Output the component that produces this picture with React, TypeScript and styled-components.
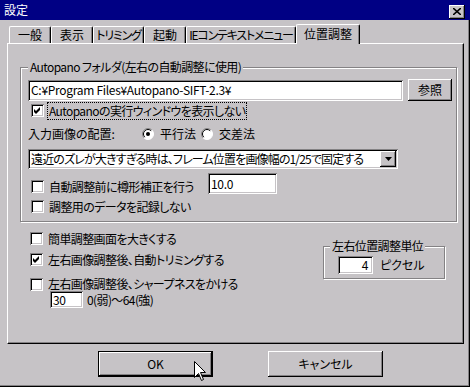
import React from 'react'
import styled, { createGlobalStyle, css } from 'styled-components'

const FACE = '#c6c3c6'
const SHADOW = '#848284'
const TITLE = '#000084'

const GlobalStyle = createGlobalStyle`
  html, body {
    margin: 0;
    padding: 0;
    background: ${FACE};
  }
  body {
    font-family: 'Noto Sans CJK JP', 'Noto Sans', sans-serif;
    font-size: 12px;
    line-height: 14px;
    letter-spacing: -0.6px;
    color: #000;
    font-feature-settings: 'palt' 1;
  }
  * {
    box-sizing: border-box;
  }
`

const raised = css`
  background: ${FACE};
  box-shadow: inset -1px -1px 0 #000, inset 1px 1px 0 #fff, inset -2px -2px 0 ${SHADOW};
`

const sunken = css`
  background: #fff;
  box-shadow: inset 1px 1px 0 ${SHADOW}, inset -1px -1px 0 #fff, inset 2px 2px 0 #000, inset -2px -2px 0 ${FACE};
`

const etched = css`
  border: 1px solid ${SHADOW};
  box-shadow: 1px 1px 0 #fff, inset 1px 1px 0 #fff;
`

const Window = styled.div`
  width: 470px;
  height: 387px;
  background: ${FACE};
  display: flex;
  flex-direction: column;
  box-shadow: inset -1px -1px 0 #000, inset -2px -2px 0 ${SHADOW};
`

const TitleBar = styled.div`
  height: 20px;
  background: ${TITLE};
  color: #fff;
  display: flex;
  align-items: center;
  padding: 0 5px 0 4px;
`

const TitleText = styled.span`
  font-size: 12px;
  letter-spacing: 0;
`

const CloseButton = styled.div`
  ${raised};
  margin-left: auto;
  margin-top: 3px;
  width: 16px;
  height: 14px;
  display: flex;
  align-items: center;
  justify-content: center;
`

const Body = styled.div`
  padding: 4px 0 0 7px;
`

const TabStrip = styled.div`
  height: 19px;
  display: flex;
  align-items: flex-end;
  padding-left: 2px;
`

const Tab = styled.div<{ $w: number; $active?: boolean; $tight?: boolean }>`
  width: ${(p) => p.$w}px;
  height: ${(p) => (p.$active ? 20 : 17)}px;
  margin-bottom: ${(p) => (p.$active ? -1 : 0)}px;
  position: relative;
  z-index: ${(p) => (p.$active ? 1 : 0)};
  background: ${FACE};
  border-top: 1px solid #fff;
  border-left: 1px solid #fff;
  border-right: 1px solid #000;
  border-radius: 2px 2px 0 0;
  box-shadow: inset -1px 0 0 ${SHADOW};
  display: flex;
  justify-content: center;
  padding-top: ${(p) => (p.$active ? 2 : 1)}px;
  white-space: nowrap;
  letter-spacing: ${(p) => (p.$tight ? -1.2 : 0)}px;
`

const Panel = styled.div`
  width: 457px;
  height: 301px;
  border-top: 1px solid #fff;
  border-left: 1px solid #fff;
  border-right: 1px solid #000;
  border-bottom: 1px solid #000;
  box-shadow: inset -1px -1px 0 ${SHADOW};
  padding: 16px 0 0 12px;
`

const Group = styled.fieldset<{ $w: number; $h: number }>`
  ${etched};
  width: ${(p) => p.$w}px;
  height: ${(p) => p.$h}px;
  margin: 0;
  padding: 0 4px 0 7px;
  min-width: 0;
`

const Legend = styled.legend`
  padding: 0 2px;
  line-height: 14px;
  background: ${FACE};
  white-space: nowrap;
`

const Column = styled.div`
  display: flex;
  flex-direction: column;
`

const Row = styled.div<{ $mt: number; $h: number; $align?: string }>`
  display: flex;
  align-items: ${(p) => p.$align || 'center'};
  margin-top: ${(p) => p.$mt}px;
  height: ${(p) => p.$h}px;
`

const TextBox = styled.div<{ $w: number; $h: number; $right?: boolean }>`
  ${sunken};
  width: ${(p) => p.$w}px;
  height: ${(p) => p.$h}px;
  padding: 0 ${(p) => (p.$right ? 5 : 3)}px 0 3px;
  display: flex;
  align-items: center;
  justify-content: ${(p) => (p.$right ? 'flex-end' : 'flex-start')};
  white-space: nowrap;
  overflow: hidden;
  letter-spacing: -0.3px;
`

const PushButton = styled.div<{ $w: number; $h: number; $default?: boolean }>`
  ${raised};
  width: ${(p) => p.$w}px;
  height: ${(p) => p.$h}px;
  display: flex;
  align-items: center;
  justify-content: center;
  position: relative;
  letter-spacing: 0;
  ${(p) =>
    p.$default &&
    css`
      border: 1px solid #000;
    `}
`

const CheckItem = styled.label<{ $w?: number; $focus?: boolean }>`
  display: flex;
  align-items: center;
  gap: 4px;
  padding-left: 3px;
  width: ${(p) => (p.$w ? `${p.$w}px` : 'auto')};
  white-space: nowrap;
  span {
    padding: 1px 1px;
    outline: ${(p) => (p.$focus ? '1px dotted #000' : 'none')};
  }
`

const Box = styled.div`
  ${sunken};
  width: 13px;
  height: 13px;
  flex: none;
`

const Caption = styled.span<{ $w?: number }>`
  display: inline-block;
  width: ${(p) => (p.$w ? `${p.$w}px` : 'auto')};
  white-space: nowrap;
  letter-spacing: 0;
`

const RadioItem = styled.label<{ $w?: number }>`
  display: flex;
  align-items: center;
  gap: 6px;
  width: ${(p) => (p.$w ? `${p.$w}px` : 'auto')};
  white-space: nowrap;
  letter-spacing: 0;
`

const Combo = styled.div`
  ${sunken};
  width: 370px;
  height: 20px;
  display: flex;
  align-items: center;
  padding: 2px 2px 2px 3px;
  white-space: nowrap;
`

const ComboText = styled.span`
  flex: none;
  letter-spacing: -0.85px;
`

const ComboArrow = styled.div`
  ${raised};
  margin-left: auto;
  width: 16px;
  height: 16px;
  flex: none;
  display: flex;
  align-items: center;
  justify-content: center;
`

const Lower = styled.div`
  display: flex;
  align-items: flex-start;
`

const LeftCol = styled.div`
  width: 303px;
  padding-left: 10px;
  display: flex;
  flex-direction: column;
`

const SmallNote = styled.span`
  margin-left: 4px;
`

const ButtonRow = styled.div`
  display: flex;
  gap: 55px;
  margin-top: 7px;
  padding-left: 91px;
`

const Cursor = styled.svg`
  position: absolute;
  left: 95px;
  top: 9px;
`

const Check = ({ checked }: { checked?: boolean }) => (
  <Box>
    {checked && (
      <svg width="13" height="13" viewBox="0 0 13 13">
        <path d="M3 5 L5 7 L9 3 L9 6 L5 10 L3 8 Z" fill="#000" />
      </svg>
    )}
  </Box>
)

const Radio = ({ checked }: { checked?: boolean }) => (
  <svg width="12" height="12" viewBox="0 0 12 12" style={{ flex: 'none' }}>
    <circle cx="6" cy="6" r="5.5" fill="#fff" />
    <path d="M2.1 9.9 A5.5 5.5 0 0 1 9.9 2.1" stroke={SHADOW} fill="none" />
    <path d="M2.8 9.2 A4.5 4.5 0 0 1 9.2 2.8" stroke="#000" fill="none" />
    <path d="M9.9 2.1 A5.5 5.5 0 0 1 2.1 9.9" stroke="#fff" fill="none" />
    {checked && <circle cx="6" cy="6" r="2" fill="#000" />}
  </svg>
)

const tabs = [
  { label: '一般', w: 42 },
  { label: '表示', w: 42 },
  { label: 'トリミング', w: 51, tight: true },
  { label: '起動', w: 42 },
  { label: 'IEコンテキストメニュー', w: 110, tight: true },
  { label: '位置調整', w: 64, active: true },
]

const App = () => {
  return (
    <>
      <GlobalStyle />
      <Window>
        <TitleBar>
          <TitleText>設定</TitleText>
          <CloseButton>
            <svg width="8" height="7" viewBox="0 0 8 7">
              <path d="M0 0 L8 7 M8 0 L0 7" stroke="#000" strokeWidth="1.6" />
            </svg>
          </CloseButton>
        </TitleBar>
        <Body>
          <TabStrip>
            {tabs.map((t) => (
              <Tab key={t.label} $w={t.w} $active={t.active} $tight={t.tight}>
                {t.label}
              </Tab>
            ))}
          </TabStrip>
          <Panel>
            <Group $w={437} $h={162}>
              <Legend>Autopano フォルダ(左右の自動調整に使用)</Legend>
              <Column>
                <Row $mt={5} $h={22}>
                  <TextBox $w={376} $h={21}>C:¥Program Files¥Autopano-SIFT-2.3¥</TextBox>
                  <PushButton $w={44} $h={22} style={{ marginLeft: 5 }}>
                    参照
                  </PushButton>
                </Row>
                <Row $mt={1} $h={17}>
                  <CheckItem $focus>
                    <Check checked />
                    <span>Autopanoの実行ウィンドウを表示しない</span>
                  </CheckItem>
                </Row>
                <Row $mt={6} $h={17}>
                  <Caption $w={114}>入力画像の配置:</Caption>
                  <RadioItem $w={59}>
                    <Radio checked />
                    平行法
                  </RadioItem>
                  <RadioItem>
                    <Radio />
                    交差法
                  </RadioItem>
                </Row>
                <Row $mt={7} $h={20}>
                  <Combo>
                    <ComboText>遠近のズレが大きすぎる時は、フレーム位置を画像幅の1/25で固定する</ComboText>
                    <ComboArrow>
                      <svg width="7" height="4" viewBox="0 0 7 4">
                        <path d="M0 0 H7 L3.5 4 Z" fill="#000" />
                      </svg>
                    </ComboArrow>
                  </Combo>
                </Row>
                <Row $mt={4} $h={21} $align="flex-end">
                  <CheckItem $w={180} style={{ height: 15 }}>
                    <Check />
                    <span>自動調整前に樽形補正を行う</span>
                  </CheckItem>
                  <TextBox $w={69} $h={21}>10.0</TextBox>
                </Row>
                <Row $mt={5} $h={15}>
                  <CheckItem>
                    <Check />
                    <span>調整用のデータを記録しない</span>
                  </CheckItem>
                </Row>
              </Column>
            </Group>
            <Lower>
              <LeftCol>
                <Row $mt={9} $h={15}>
                  <CheckItem style={{ paddingLeft: 0 }}>
                    <Check />
                    <span>簡単調整画面を大きくする</span>
                  </CheckItem>
                </Row>
                <Row $mt={6} $h={15}>
                  <CheckItem style={{ paddingLeft: 0 }}>
                    <Check checked />
                    <span>左右画像調整後、自動トリミングする</span>
                  </CheckItem>
                </Row>
                <Row $mt={10} $h={14}>
                  <CheckItem style={{ paddingLeft: 0 }}>
                    <Check />
                    <span>左右画像調整後、シャープネスをかける</span>
                  </CheckItem>
                </Row>
                <Row $mt={0} $h={17} style={{ paddingLeft: 20 }}>
                  <TextBox $w={33} $h={17}>30</TextBox>
                  <SmallNote>0(弱)～64(強)</SmallNote>
                </Row>
              </LeftCol>
              <Group $w={122} $h={40} style={{ marginTop: 17, padding: '0 4px 0 6px' }}>
                <Legend>左右位置調整単位</Legend>
                <Row $mt={3} $h={18} style={{ paddingLeft: 8 }}>
                  <TextBox $w={35} $h={18} $right>4</TextBox>
                  <Caption style={{ marginLeft: 7 }}>ピクセル</Caption>
                </Row>
              </Group>
            </Lower>
          </Panel>
          <ButtonRow>
            <PushButton $w={115} $h={26} $default>
              OK
              <Cursor width="13" height="21" viewBox="0 0 13 21">
                <path
                  d="M0.5 0.5 L0.5 16.5 L4.5 12.5 L7.5 19.5 L9.5 18.5 L6.5 11.5 L11.5 11.5 Z"
                  fill="#fff"
                  stroke="#000"
                />
              </Cursor>
            </PushButton>
            <PushButton $w={115} $h={26}>
              キャンセル
            </PushButton>
          </ButtonRow>
        </Body>
      </Window>
    </>
  )
}

export default App
